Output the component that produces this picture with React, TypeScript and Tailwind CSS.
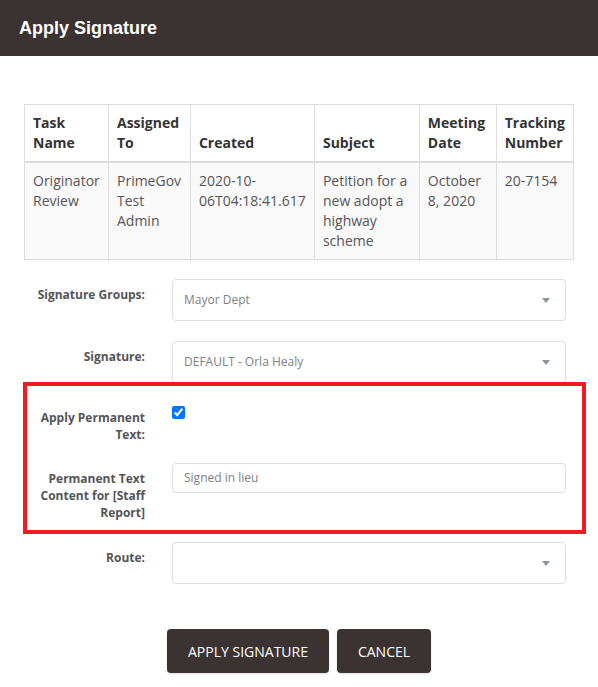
import React from 'react';

const columns = [
  { label: 'Task Name', width: 'w-[84px]' },
  { label: 'Assigned To', width: 'w-[82px]' },
  { label: 'Created', width: 'w-[124px]' },
  { label: 'Subject', width: 'w-[106px]' },
  { label: 'Meeting Date', width: 'w-[77px]' },
  { label: 'Tracking Number', width: 'w-[77px]' },
];

const row = [
  'Originator Review',
  'PrimeGov Test Admin',
  '2020-10-06T04:18:41.617',
  'Petition for a new adopt a highway scheme',
  'October 8, 2020',
  '20-7154',
];

function Caret() {
  return (
    <svg width="8" height="5" viewBox="0 0 8 5" className="shrink-0">
      <path d="M0 0 L8 0 L4 5 Z" fill="#8a9599" />
    </svg>
  );
}

function SelectBox({ value }: { value?: string }) {
  return (
    <div className="h-[42px] w-full rounded-[4px] border border-[#e0e0e0] bg-white pl-[11px] pr-[15px] flex items-center justify-between">
      <span className="text-[12px] text-[#808080] leading-none">{value}</span>
      <Caret />
    </div>
  );
}

function FormRow({ label, children }: { label: React.ReactNode; children: React.ReactNode }) {
  return (
    <div className="flex">
      <div className="w-[118px] shrink-0 pt-[7px] text-right text-[12px] leading-[17px] font-bold text-[#555]">
        {label}
      </div>
      <div className="ml-[27px] flex-1 mr-[16px]">{children}</div>
    </div>
  );
}

export default function App() {
  return (
    <div className="min-h-[687px] bg-white font-['Open_Sans',sans-serif] text-[#333]">
      <div className="h-[56px] bg-[#3b3331] flex items-center pl-[19px]">
        <h1 className="font-['Liberation_Sans',Arial,sans-serif] font-bold text-[18px] text-white">Apply Signature</h1>
      </div>

      <div className="pt-[48px] px-[24px]">
        <table className="w-[550px] border-collapse border border-[#ddd] text-[14px] leading-[20px]">
          <thead>
            <tr>
              {columns.map((c) => (
                <th
                  key={c.label}
                  className={`${c.width} border border-[#ddd] border-b-2 px-[8px] py-[8px] text-left align-bottom font-bold text-[#333]`}
                >
                  {c.label}
                </th>
              ))}
            </tr>
          </thead>
          <tbody>
            <tr className="bg-[#f9f9f9]">
              {row.map((cell, i) => (
                <td key={i} className="border border-[#ddd] px-[8px] py-[8px] align-top text-[#555] break-words">
                  {cell === '2020-10-06T04:18:41.617' ? (
                    <>
                      2020-10-
                      <br />
                      06T04:18:41.617
                    </>
                  ) : (
                    cell
                  )}
                </td>
              ))}
            </tr>
          </tbody>
        </table>
      </div>

      <div className="mt-[19px] ml-[23px] mr-[12px]">
        <div className="border-x-4 border-transparent">
          <FormRow label="Signature Groups:">
            <SelectBox value="Mayor Dept" />
          </FormRow>
          <div className="h-[20px]" />
          <FormRow label="Signature:">
            <div className="h-[41px] overflow-hidden">
              <SelectBox value="DEFAULT - Orla Healy" />
            </div>
          </FormRow>
        </div>

        <div className="border-4 border-[#ed1c24] pt-[16px] pb-[9px]">
          <FormRow
            label={
              <>
                Apply Permanent
                <br />
                Text:
              </>
            }
          >
            <input type="checkbox" defaultChecked className="mt-[4px] h-[13px] w-[13px] accent-[#0075ff] block" />
          </FormRow>
          <div className="h-[20px]" />
          <FormRow
            label={
              <>
                Permanent Text
                <br />
                Content for [Staff
                <br />
                Report]
              </>
            }
          >
            <div className="h-[30px] rounded-[4px] border border-[#e0e0e0] bg-white pl-[11px] flex items-center">
              <span className="text-[12px] text-[#808080] leading-none">Signed in lieu</span>
            </div>
          </FormRow>
        </div>

        <div className="border-x-4 border-transparent pt-[8px]">
          <FormRow label="Route:">
            <SelectBox />
          </FormRow>
        </div>
      </div>

      <div className="mt-[45px] flex justify-center gap-[8px]">
        <button className="h-[44px] w-[162px] rounded-[4px] bg-[#3b3331] text-white text-[14px] uppercase shadow-sm">
          Apply Signature
        </button>
        <button className="h-[44px] w-[94px] rounded-[4px] bg-[#3b3331] text-white text-[14px] uppercase shadow-sm">
          Cancel
        </button>
      </div>
    </div>
  );
}
